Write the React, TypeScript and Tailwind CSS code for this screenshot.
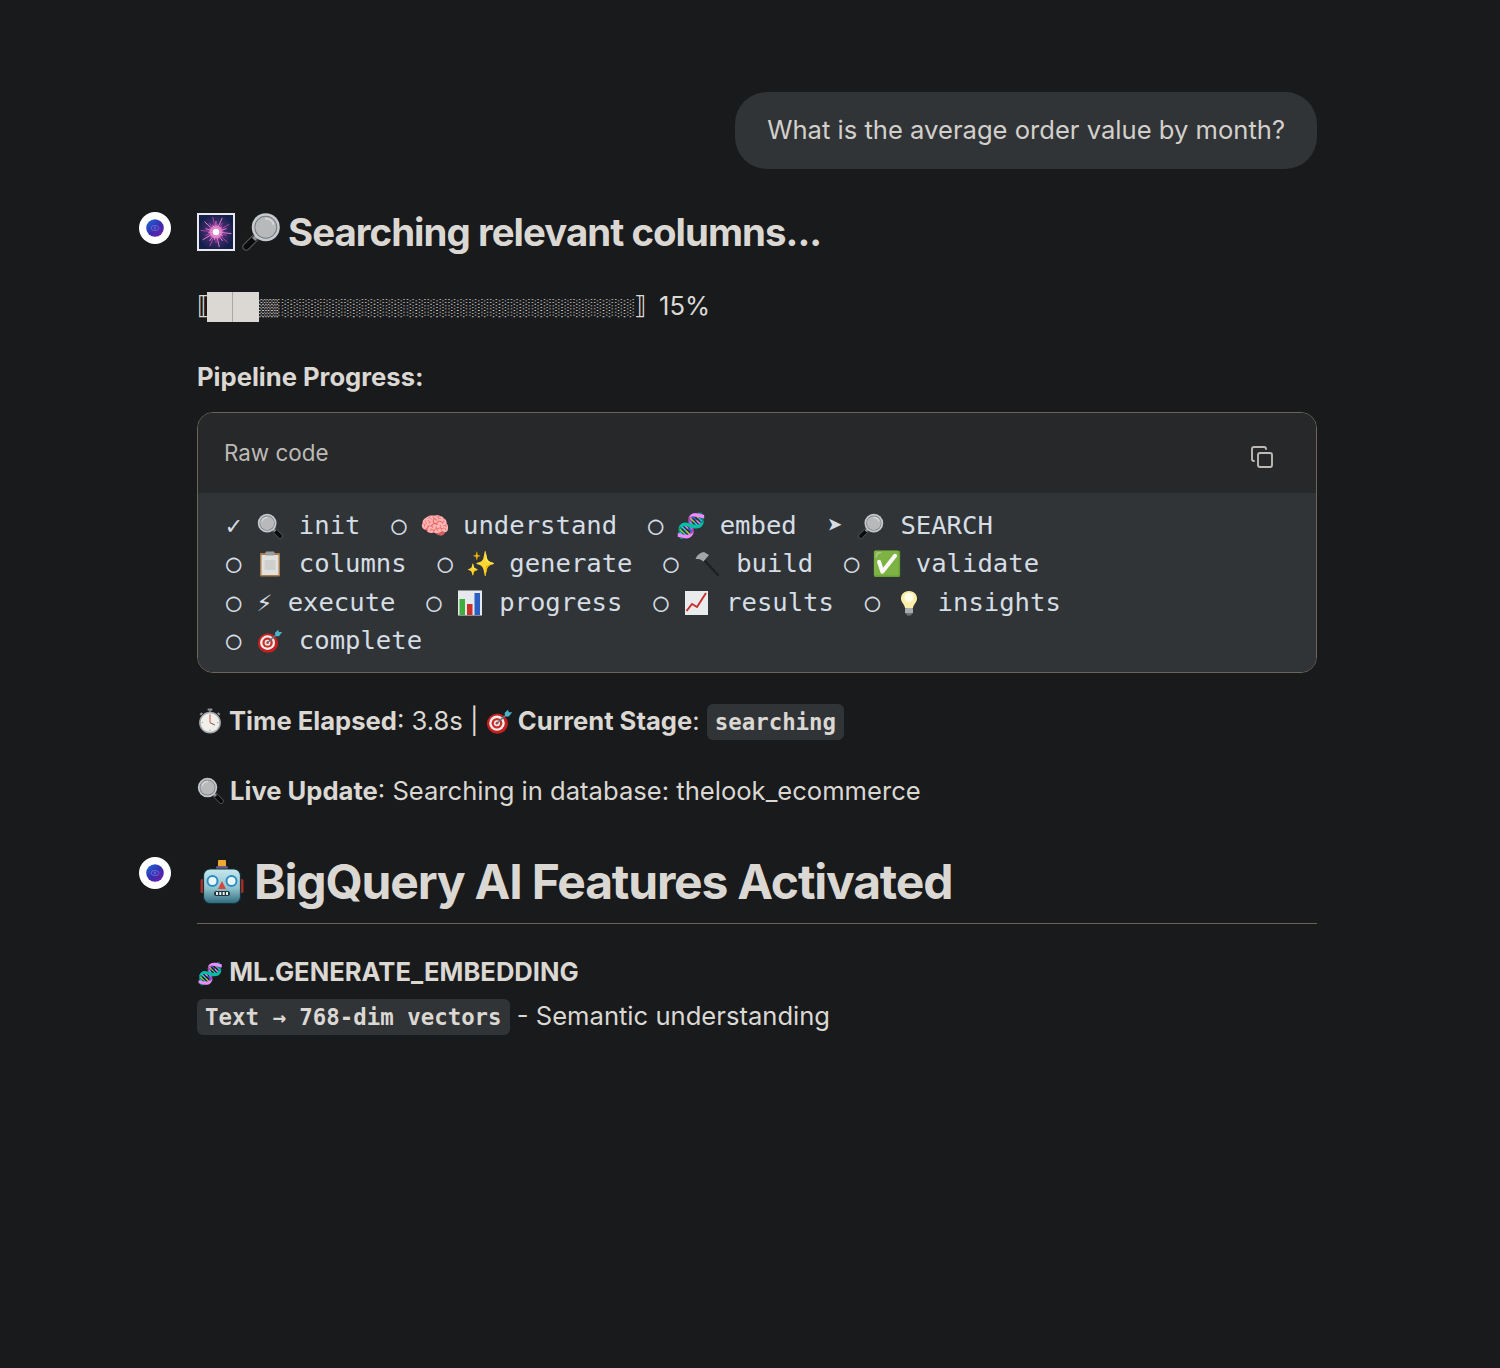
import React from "react";
import { Copy } from "lucide-react";

const mono = "font-['DejaVu_Sans_Mono',monospace]";

const Avatar = ({ top }: { top: string }) => (
  <div className={`w-8 h-8 rounded-full bg-white flex items-center justify-center shrink-0 ${top}`}>
    <svg width="18" height="18" viewBox="0 0 18 18">
      <defs>
        <linearGradient id="av" x1="0.15" y1="0.1" x2="0.85" y2="0.9">
          <stop offset="0" stopColor="#1f5fd0" />
          <stop offset="0.55" stopColor="#3a2bb0" />
          <stop offset="1" stopColor="#6a1fa8" />
        </linearGradient>
      </defs>
      <circle cx="9" cy="9" r="8.8" fill="url(#av)" />
      <ellipse cx="9" cy="9" rx="4" ry="2.6" fill="none" stroke="#6f74d8" strokeWidth="0.8" />
      <circle cx="9" cy="9" r="1.4" fill="#5a5fc8" />
    </svg>
  </div>
);

type EP = { size: number; cls?: string };
const slot = "align-[-5px] mr-[0.6px]";

const Lens = ({ flip, size, cls }: EP & { flip?: boolean }) => (
  <svg width={size} height={size} viewBox="0 0 32 32" className={`inline-block ${cls ?? ""}`}>
    <g transform={flip ? "translate(32 0) scale(-1 1)" : undefined}>
      <path d="M21.5 21.5 L28.5 28.5" stroke="#55575a" strokeWidth="6.4" strokeLinecap="round" />
      <path d="M21.5 21.5 L28.5 28.5" stroke="#0b0b0c" strokeWidth="4.6" strokeLinecap="round" />
      <path d="M19.5 19.5 L22.5 22.5" stroke="#8b8d90" strokeWidth="3.6" />
      <circle cx="12.5" cy="12.5" r="11.5" fill="#c4cad0" />
      <circle cx="12.5" cy="12.5" r="9.4" fill="#77797c" />
      <circle cx="12.5" cy="12.5" r="8.6" fill="#b7b9bb" />
      <path d="M6 10.5 a7 7 0 0 1 7 -5" stroke="#d8dadb" strokeWidth="1.4" fill="none" />
    </g>
  </svg>
);

const Firework = ({ size, cls }: EP) => (
  <svg width={size} height={size} viewBox="0 0 38 38" className={`inline-block ${cls ?? ""}`}>
    <defs>
      <radialGradient id="fw">
        <stop offset="0" stopColor="#8a3a96" />
        <stop offset="0.6" stopColor="#3a2a6a" />
        <stop offset="1" stopColor="#14204a" />
      </radialGradient>
    </defs>
    <rect x="1" y="1" width="36" height="36" fill="url(#fw)" stroke="#e8e9ee" strokeWidth="2" />
    {Array.from({ length: 30 }).map((_, i) => {
      const a = (i / 30) * Math.PI * 2 + 0.1;
      const r = i % 3 === 0 ? 15.5 : i % 3 === 1 ? 11 : 8;
      return (
        <line key={i} x1="19" y1="19" x2={19 + Math.cos(a) * r} y2={19 + Math.sin(a) * r} stroke={i % 2 ? "#b84aa8" : "#ee8ad0"} strokeWidth="0.9" />
      );
    })}
    <circle cx="19" cy="19" r="6.5" fill="#ef8ed4" opacity="0.75" />
    <circle cx="19" cy="19" r="3.2" fill="#fff" />
  </svg>
);

const Target = ({ size, cls }: EP) => (
  <svg width={size} height={size} viewBox="0 0 32 32" className={`inline-block ${cls ?? ""}`}>
    <ellipse cx="13.5" cy="18.5" rx="12.5" ry="12" fill="#c2211f" />
    <ellipse cx="13" cy="18" rx="9.2" ry="9" fill="#f2ecea" />
    <ellipse cx="13" cy="18" rx="6.4" ry="6.2" fill="#c9302c" />
    <ellipse cx="13" cy="18" rx="3.6" ry="3.5" fill="#f2ecea" />
    <circle cx="13" cy="18" r="1.6" fill="#c9302c" />
    <path d="M13 18 L25 7" stroke="#5c7480" strokeWidth="1.8" />
    <path d="M22 6 L26 2 L27 5 L31 5 L27 10 L23 10 Z" fill="#4fb3c8" />
  </svg>
);

const Timer = ({ size, cls }: EP) => (
  <svg width={size} height={size} viewBox="0 0 32 32" className={`inline-block ${cls ?? ""}`}>
    <rect x="13" y="0.5" width="6" height="3" rx="1" fill="#8d9094" />
    <rect x="15" y="3" width="2" height="4" fill="#7d8084" />
    <path d="M25.5 6 L28 8.5" stroke="#8d9094" strokeWidth="2.4" />
    <path d="M6.5 6 L4 8.5" stroke="#8d9094" strokeWidth="2.4" />
    <circle cx="16" cy="18" r="13.4" fill="#a4a8ac" />
    <circle cx="16" cy="18" r="11.6" fill="#f2eeea" />
    <path d="M16 18 L16 8.6" stroke="#c9483a" strokeWidth="1.1" />
    <path d="M16 18 L22 21" stroke="#55585c" strokeWidth="1.2" />
    <path d="M16 7.6 V9.4 M16 26.6 V28.4 M5.6 18 H7.4 M24.6 18 H26.4" stroke="#8d9094" strokeWidth="1" />
  </svg>
);

const Robot = ({ size, cls }: EP) => (
  <svg width={size} height={size} viewBox="0 0 44 44" className={`inline-block ${cls ?? ""}`}>
    <defs>
      <linearGradient id="rb" x1="0" y1="0" x2="0" y2="1">
        <stop offset="0" stopColor="#c6e8ee" />
        <stop offset="0.55" stopColor="#8fc3ce" />
        <stop offset="1" stopColor="#2f6a7a" />
      </linearGradient>
    </defs>
    <rect x="0.5" y="19" width="4" height="14" rx="1.5" fill="#b02a22" />
    <rect x="39.5" y="19" width="4" height="14" rx="1.5" fill="#b02a22" />
    <path d="M18 2 a4 4 0 0 1 8 0 v5 h-8 z" fill="#f0a92e" />
    <rect x="16" y="6" width="12" height="5" rx="1.5" fill="#6b5a88" />
    <rect x="3.5" y="9" width="37" height="34.5" rx="6.5" fill="url(#rb)" stroke="#10333e" strokeWidth="1.2" />
    <circle cx="12.5" cy="21" r="5" fill="#eaf7fa" stroke="#2c8bc4" strokeWidth="2" />
    <circle cx="31.5" cy="21" r="5" fill="#eaf7fa" stroke="#2c8bc4" strokeWidth="2" />
    <path d="M22 21 L26 29 H18 Z" fill="#d2483e" />
    <rect x="14" y="31" width="16" height="5" rx="2.5" fill="#20343c" />
    <path d="M17 32 v3 M20.3 32 v3 M23.7 32 v3 M27 32 v3" stroke="#e8eef0" strokeWidth="2" />
  </svg>
);

const Clipboard = ({ size, cls }: EP) => (
  <svg width={size} height={size} viewBox="0 0 26 26" className={`inline-block ${cls ?? ""}`}>
    <rect x="3" y="2" width="20" height="23.5" rx="1" fill="#a87b4c" />
    <rect x="4.5" y="4" width="17" height="20" fill="#e0e0de" />
    <rect x="7.5" y="9" width="11" height="10" fill="#cfcfcd" />
    <rect x="8.5" y="0.5" width="9" height="4" rx="1" fill="#9b9c9e" />
  </svg>
);

const Hammer = ({ size, cls }: EP) => (
  <svg width={size} height={size} viewBox="0 0 26 26" className={`inline-block ${cls ?? ""}`}>
    <path d="M10 9 L24 24" stroke="#1d1f20" strokeWidth="2.2" strokeLinecap="round" />
    <path d="M1.5 8 C3 4 6 1.5 10 1 L15 4 L9.5 10.5 L6.5 8.5 C5 7.5 3 8 1.5 8 Z" fill="#a3a6a9" />
  </svg>
);

const Bars = ({ size, cls }: EP) => (
  <svg width={size} height={size} viewBox="0 0 26 26" className={`inline-block ${cls ?? ""}`}>
    <rect x="1" y="0.5" width="24" height="25" fill="#e6e9ec" />
    <rect x="2.5" y="9" width="5.5" height="16" fill="#3fae3f" />
    <rect x="10" y="14" width="5.5" height="11" fill="#c8302a" />
    <rect x="17.5" y="3" width="5.5" height="22" fill="#2b5fc4" />
  </svg>
);

const Chart = ({ size, cls }: EP) => (
  <svg width={size} height={size} viewBox="0 0 26 26" className={`inline-block ${cls ?? ""}`}>
    <rect x="1" y="1" width="23" height="24" fill="#e9ebed" />
    <path d="M2.5 21 L8 14 L13 17 L22 3" stroke="#c8312c" strokeWidth="2" fill="none" />
  </svg>
);

const Bulb = ({ size, cls }: EP) => (
  <svg width={size} height={size} viewBox="0 0 26 26" className={`inline-block ${cls ?? ""}`}>
    <path d="M13 1 C7.5 1 5 5 5 8.5 C5 12.5 8.5 14 9 18 H17 C17.5 14 21 12.5 21 8.5 C21 5 18.5 1 13 1 Z" fill="#fbeea8" />
    <circle cx="13" cy="7.5" r="4.5" fill="#fffde8" />
    <rect x="9" y="18" width="8" height="5.5" rx="1" fill="#a9abad" />
    <rect x="10.5" y="23.5" width="5" height="2" rx="1" fill="#6f7174" />
  </svg>
);

const E = ({ c }: { c: string }) => (
  <span className="font-['Noto_Color_Emoji','Noto_Sans',sans-serif] text-[24px] leading-none mx-[-2.2px]">{c}</span>
);

const Code = ({ children }: { children: React.ReactNode }) => (
  <code className={`bg-[#313437] rounded-md px-2 py-[5px] text-[22.4px] font-bold ${mono}`}>{children}</code>
);

export default function App() {
  return (
    <div className="min-h-[1368px] bg-[#191a1c] text-[#dbd8d3] font-['Inter',sans-serif] text-[25.6px] leading-[38.4px] pt-[92px] pl-[139px] pr-[183px]">
      <div className="flex justify-end">
        <div className="bg-[#313437] rounded-[32px] px-8 py-[19.2px] text-[#d3d0cb]">What is the average order value by month?</div>
      </div>
      <div className="flex gap-[26px] mt-[41px]">
        <Avatar top="mt-[2px]" />
        <div className="flex-1 min-w-0">
          <h2 className="text-[38.4px] leading-[44px] font-bold tracking-tight flex items-center">
            <Firework size={38} />
            <Lens flip size={39} cls="ml-[7px] mr-[7px]" />
            <span>Searching relevant columns...</span>
          </h2>
          <div className="mt-[33px] flex items-center h-[38.4px]">
            <span className="font-['DejaVu_Sans',sans-serif] text-[25px] w-[10px] leading-none">⟦</span>
            <span className="h-[30px] w-[26px] mt-[2px] bg-[#dbd8d3] border-r border-[#a9a7a2]" />
            <span className="h-[30px] w-[26px] mt-[2px] bg-[#dbd8d3]" />
            <span className="inline-block w-[21px] mt-[3px] scale-y-[0.585] font-['Liberation_Sans',sans-serif] text-[29.4px] whitespace-pre">▒</span>
            <span className="inline-block w-[353px] mt-[3px] scale-y-[0.585] font-['Liberation_Sans',sans-serif] text-[29.4px] whitespace-pre">░░░░░░░░░░░░░░░░░</span>
            <span className="font-['DejaVu_Sans',sans-serif] text-[25px] leading-none ml-[1px] w-[25px]">⟧</span>
            <span>15%</span>
          </div>
          <p className="mt-[33px] font-[650]">Pipeline Progress:</p>
          <div className="mt-[15px] rounded-[16px] border border-[#6a6558] overflow-hidden">
            <div className="bg-[#26282a] h-[80px] flex items-center justify-between pl-[26px] pr-[42px] text-[22.4px]">
              <span className="text-[#bdbab5] mt-[1px]">Raw code</span>
              <Copy size={24} strokeWidth={1.9} className="text-[#bdbab5] mt-[9px]" />
            </div>
            <pre className={`bg-[#313437] pl-[28px] pr-[26px] pt-[13.3px] pb-[12.7px] text-[25.6px] leading-[38.4px] text-[#d5dde5] ${mono}`}>
              <div>✓ <Lens size={26} cls={slot} /> init  ○ <E c="🧠" /> understand  ○ <E c="🧬" /> embed  ➤ <Lens flip size={26} cls={slot} /> SEARCH</div>
              <div>○ <Clipboard size={26} cls={slot} /> columns  ○ <E c="✨" /> generate  ○ <Hammer size={26} cls={slot} /> build  ○ <E c="✅" /> validate</div>
              <div>○ ⚡ execute  ○ <Bars size={26} cls={slot} /> progress  ○ <Chart size={26} cls={slot} /> results  ○ <Bulb size={26} cls={slot} /> insights</div>
              <div>○ <Target size={26} cls={slot} /> complete</div>
            </pre>
          </div>
          <p className="mt-[29px]">
            <Timer size={26} cls="align-[-4px] mr-[6px]" />
            <b className="font-[650]">Time Elapsed</b>: 3.8s | <Target size={27} cls="align-[-5px] mr-[5px]" />
            <b className="font-[650]">Current Stage</b>: <Code>searching</Code>
          </p>
          <p className="mt-[30px]">
            <Lens size={27} cls="align-[-4px] mr-[6px]" />
            <b className="font-[650]">Live Update</b>: Searching in database: thelook_ecommerce
          </p>
        </div>
      </div>
      <div className="flex gap-[26px] mt-[44px]">
        <Avatar top="mt-[3px]" />
        <div className="flex-1 min-w-0">
          <h1 className="text-[48px] leading-[56px] font-bold tracking-tight pb-[13px] border-b border-[#6a6558]">
            <Robot size={44} cls="ml-[3px] mr-[10px] align-[-5px]" />BigQuery AI Features Activated
          </h1>
          <h3 className="mt-[29px] font-[650]">
            <span className="font-['Noto_Color_Emoji'] text-[21px] leading-none mr-[6px]">🧬</span>ML.GENERATE_EMBEDDING
          </h3>
          <p className="mt-[6px]"><Code>Text → 768-dim vectors</Code> - Semantic understanding</p>
        </div>
      </div>
    </div>
  );
}
